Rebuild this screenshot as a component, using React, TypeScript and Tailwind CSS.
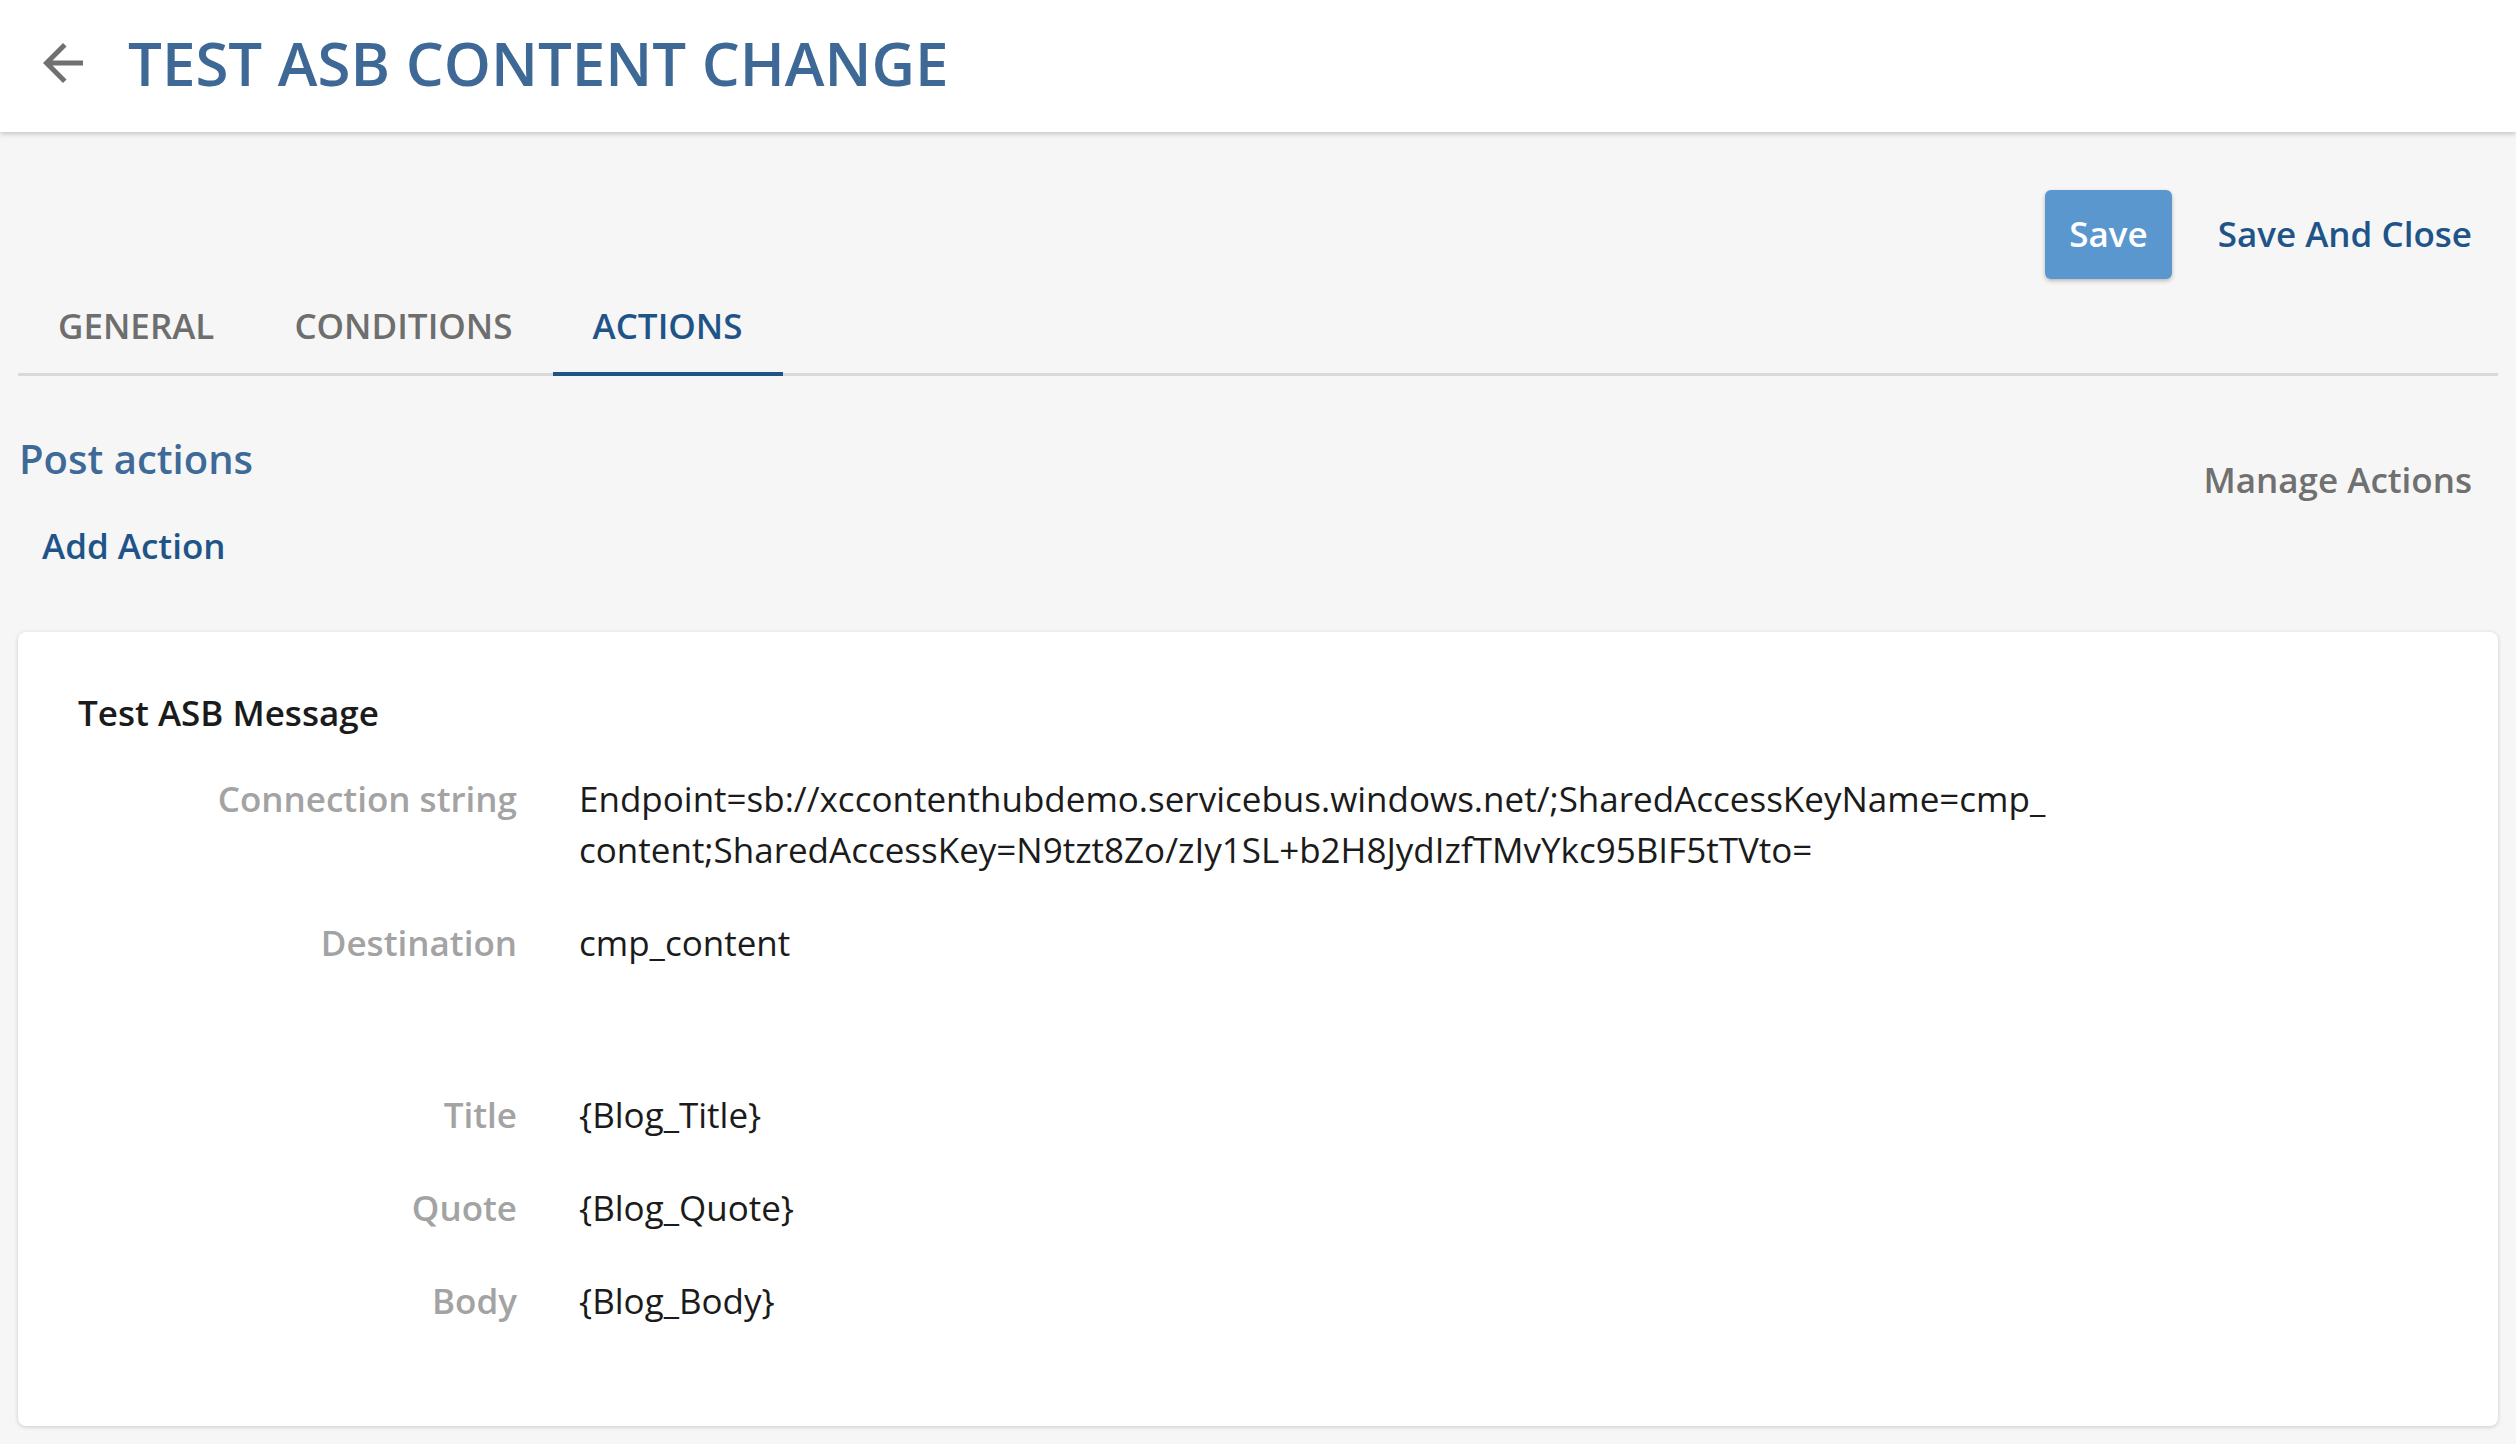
import { useState } from "react";

const tabs = ["GENERAL", "CONDITIONS", "ACTIONS"];

const rows: { label: string; value: React.ReactNode }[] = [
    {
        label: "Connection string",
        value: (
            <>
                Endpoint=sb://xccontenthubdemo.servicebus.windows.net/;SharedAccessKeyName=cmp_
                <br />
                content;SharedAccessKey=N9tzt8Zo/zIy1SL+b2H8JydIzfTMvYkc95BIF5tTVto=
            </>
        ),
    },
    { label: "Destination", value: "cmp_content" },
];

const fields = [
    { label: "Title", value: "{Blog_Title}" },
    { label: "Quote", value: "{Blog_Quote}" },
    { label: "Body", value: "{Blog_Body}" },
];

function FieldRow({ label, value }: { label: string; value: React.ReactNode }) {
    return (
        <div className="flex items-start text-[35px] leading-[51px]">
            <div className="w-[439px] shrink-0 text-right font-semibold text-[#a3a3a3]">{label}</div>
            <div className="ml-[62px] text-[#1b1b1b]">{value}</div>
        </div>
    );
}

export default function App() {
    const [active, setActive] = useState("ACTIONS");

    return (
        <div
            className="min-h-screen bg-[#f6f6f6]"
            style={{ fontFamily: '"Open Sans", "Noto Sans", sans-serif' }}
        >
            {/* header */}
            <header className="flex h-[132px] items-center bg-white pb-[6px] shadow-[0_2px_5px_rgba(0,0,0,0.2)]">
                <button className="ml-[33px] flex h-[60px] w-[60px] items-center justify-center text-[#707070]">
                    <svg viewBox="0 0 24 24" className="h-[60px] w-[60px]" fill="currentColor">
                        <path d="M20 11H7.83l5.59-5.59L12 4l-8 8 8 8 1.41-1.41L7.83 13H20v-2z" />
                    </svg>
                </button>
                <h1 className="ml-[35px] text-[60px] font-semibold leading-none text-[#3e6895]">
                    TEST ASB CONTENT CHANGE
                </h1>
            </header>

            <main className="px-[18px] pb-[20px]">
                <div className="mt-[58px] flex justify-end gap-[20px]">
                    <button className="flex h-[89px] items-center rounded-[6px] bg-[#5b97cf] px-[24px] text-[35px] font-semibold text-white shadow-[0_2px_4px_rgba(0,0,0,0.25)]">
                        Save
                    </button>
                    <button className="flex h-[89px] items-center px-[26px] text-[35px] font-semibold text-[#1f5489]">
                        Save And Close
                    </button>
                </div>

                {/* tabs */}
                <div className="mt-[11px] flex border-b-[3px] border-[#d9d9d9]">
                    {tabs.map((t) => (
                        <button
                            key={t}
                            onClick={() => setActive(t)}
                            className={
                                active === t
                                    ? "-mb-[3px] border-b-4 border-[#1f5489] px-[40px] pb-[22px] pt-[12px] text-[35px] font-semibold leading-[48px] text-[#1f5489]"
                                    : "-mb-[3px] border-b-4 border-transparent px-[40px] pb-[22px] pt-[12px] text-[35px] font-semibold leading-[48px] text-[#6e6e6e]"
                            }
                        >
                            {t}
                        </button>
                    ))}
                </div>

                <div className="mt-[56px] flex items-start justify-between">
                    <div className="flex flex-col items-start">
                        <h2 className="pl-px text-[40px] font-semibold leading-[54px] text-[#3e6a98]">Post actions</h2>
                        <button className="mt-[36px] px-[24px] text-[35px] font-semibold leading-[48px] text-[#1f5489]">
                            Add Action
                        </button>
                    </div>
                    <button className="mt-[24px] px-[26px] text-[35px] font-semibold leading-[48px] text-[#707070]">
                        Manage Actions
                    </button>
                </div>

                {/* action card */}
                <section className="mt-[62px] rounded-[8px] bg-white pb-[100px] pl-[60px] pt-[58px] shadow-[0_1px_4px_rgba(0,0,0,0.18)]">
                    <h3 className="text-[35px] font-semibold leading-[46px] text-[#1b1b1b]">Test ASB Message</h3>
                    <div className="mt-[37px] flex flex-col gap-[42px]">
                        {rows.map((r) => (
                            <FieldRow key={r.label} label={r.label} value={r.value} />
                        ))}
                        <div className="h-[37px]" />
                        {fields.map((f) => (
                            <FieldRow key={f.label} label={f.label} value={f.value} />
                        ))}
                    </div>
                </section>
            </main>
        </div>
    );
}
